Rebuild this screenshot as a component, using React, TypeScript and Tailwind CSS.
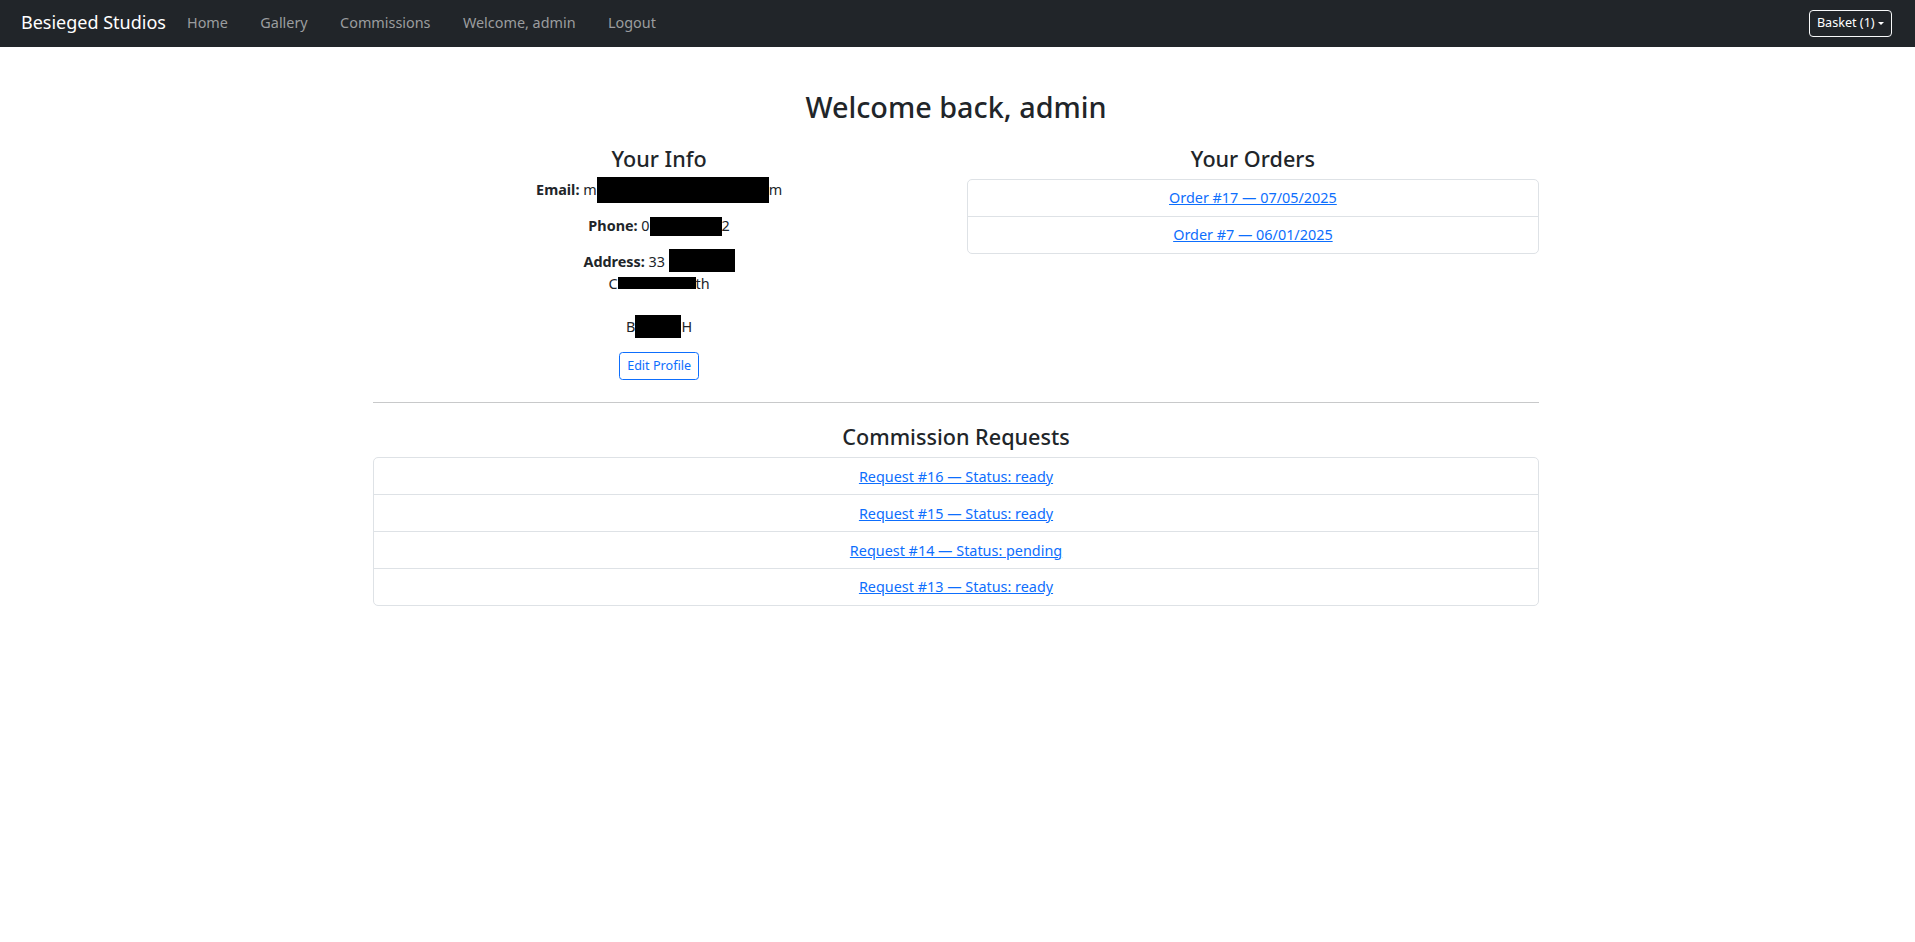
import React from 'react';

const orders = [
  { id: 17, date: '07/05/2025' },
  { id: 7, date: '06/01/2025' },
];

const requests = [
  { id: 16, status: 'ready' },
  { id: 15, status: 'ready' },
  { id: 14, status: 'pending' },
  { id: 13, status: 'ready' },
];

const navLinks = ['Home', 'Gallery', 'Commissions', 'Welcome, admin', 'Logout'];

// black redaction bar laid over the text line, margins keep the line height untouched
const Redacted = ({ className }: { className: string }) => (
  <span className={`inline-block bg-black align-top ${className}`}></span>
);

const ListGroup = ({ items }: { items: string[] }) => (
  <div className="rounded-[5px] border border-[#dee2e6]">
    {items.map((label, i) => (
      <div
        key={label}
        className={`px-[14.4px] py-[7.2px] text-center ${i > 0 ? 'border-t border-[#dee2e6]' : ''}`}
      >
        <a href="#" className="text-[#0d6efd] underline">
          {label}
        </a>
      </div>
    ))}
  </div>
);

export default function App() {
  return (
    <div className="min-h-screen bg-white font-['Noto_Sans',sans-serif] text-[#212529]">
      {/* navbar */}
      <nav className="flex h-[47px] items-center bg-[#212529] pb-[2px] pl-[21px] pr-[23px]">
        <a href="#" className="mr-[21px] text-[18px] leading-[27px] text-white">
          Besieged Studios
        </a>
        <ul className="flex gap-[32.4px] text-[14.4px] leading-[21.6px] text-[#9b9d9f]">
          {navLinks.map((link) => (
            <li key={link}>
              <a href="#">{link}</a>
            </li>
          ))}
        </ul>
        <button className="ml-auto mt-[1px] flex h-[27px] items-center rounded-[4px] border border-[#f8f9fa] px-[7.2px] text-[12.6px] leading-[18.9px] text-white">
          Basket (1)
          <span className="ml-[3.2px] h-0 w-0 border-x-[3.8px] border-t-[3.8px] border-x-transparent border-t-white"></span>
        </button>
      </nav>

      <main className="ml-[373px] w-[1166px] pt-[43px] text-[14.4px] leading-[21.6px]">
        <h2 className="mb-[21.6px] text-center text-[28.8px] font-medium leading-[34.56px]">
          Welcome back, admin
        </h2>

        <div className="grid grid-cols-2 gap-x-[21.6px]">
          {/* info */}
          <div className="text-center">
            <h4 className="mb-[7.2px] text-[21.6px] font-medium leading-[25.92px]">Your Info</h4>
            <p className="mb-[14.4px]">
              <b>Email:</b> m<Redacted className="mt-[-2px] mb-[-6px] h-[26px] w-[172px]" />m
            </p>
            <p className="mb-[14.4px]">
              <b>Phone:</b> 0<Redacted className="mt-[2px] h-[19px] w-[72px]" />2
            </p>
            <p className="mb-[14.4px]">
              <b>Address:</b> 33 <Redacted className="mt-[-2px] mb-[-2px] h-[23px] w-[66px]" />
              <br />
              C<Redacted className="mt-[4px] h-[12px] w-[78px]" />th
              <br />
              <br />
              B<Redacted className="mt-[-1px] mb-[-2px] h-[23px] w-[46px]" />H
            </p>
            <a
              href="#"
              className="inline-block rounded-[3.6px] border border-[#0d6efd] px-[7.2px] py-[3.6px] align-top text-[12.6px] leading-[18.9px] text-[#0d6efd]"
            >
              Edit Profile
            </a>
          </div>

          {/* orders */}
          <div>
            <h4 className="mb-[7.2px] text-center text-[21.6px] font-medium leading-[25.92px]">Your Orders</h4>
            <ListGroup items={orders.map((o) => `Order #${o.id} — ${o.date}`)} />
          </div>
        </div>

        <hr className="mt-[21.6px] mb-[21.6px] border-[#c8c9ca]" />

        <h4 className="mb-[7.2px] text-center text-[21.6px] font-medium leading-[25.92px]">
          Commission Requests
        </h4>
        <ListGroup items={requests.map((r) => `Request #${r.id} — Status: ${r.status}`)} />
      </main>
    </div>
  );
}
